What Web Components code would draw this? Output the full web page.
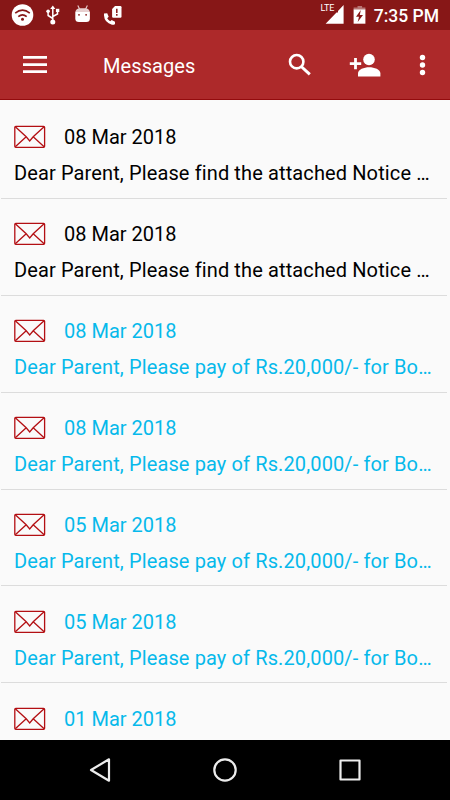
<!DOCTYPE html>
<html lang="en">
<head>
<meta charset="UTF-8">
<meta name="viewport" content="width=device-width, initial-scale=1.0">
<title>Messages</title>
<style>
    :root {
        --bar-color: #ad292a;
        --status-color: #871717;
        --unread-color: #06b9eb;
        --icon-color: #b30f13;
    }

    html, body {
        margin: 0;
        height: 100%;
        overflow: hidden;
    }

    body {
        font-family: Roboto, 'Liberation Sans', sans-serif;
        background: #fafafa;
    }
</style>
</head>
<body>
<app-screen>
    <status-bar slot="top" time="7:35 PM"></status-bar>
    <app-bar slot="top">Messages</app-bar>
    <message-item date="08 Mar 2018">Dear Parent, Please find the attached Notice …</message-item>
    <message-item date="08 Mar 2018">Dear Parent, Please find the attached Notice …</message-item>
    <message-item unread date="08 Mar 2018">Dear Parent, Please pay of Rs.20,000/- for Bo…</message-item>
    <message-item unread date="08 Mar 2018">Dear Parent, Please pay of Rs.20,000/- for Bo…</message-item>
    <message-item unread date="05 Mar 2018">Dear Parent, Please pay of Rs.20,000/- for Bo…</message-item>
    <message-item unread date="05 Mar 2018">Dear Parent, Please pay of Rs.20,000/- for Bo…</message-item>
    <message-item unread date="01 Mar 2018"></message-item>
    <nav-keys slot="bottom"></nav-keys>
</app-screen>

<script>
class AppScreen extends HTMLElement {
    constructor() {
        super();
        this.attachShadow({ mode: 'open' });
    }

    connectedCallback() {
        this.shadowRoot.innerHTML = `
            <style>
                :host {
                    display: flex;
                    flex-direction: column;
                    width: 450px;
                    height: 800px;
                    overflow: hidden;
                }

                .list {
                    flex: 1;
                    min-height: 0;
                    overflow: hidden;
                    padding: 2px 3px 0 1px;
                    background: #fafafa;
                }
            </style>
            <slot name="top"></slot>
            <div class="list"><slot></slot></div>
            <slot name="bottom"></slot>
        `;
    }
}

class StatusBar extends HTMLElement {
    constructor() {
        super();
        this.attachShadow({ mode: 'open' });
    }

    connectedCallback() {
        this.shadowRoot.innerHTML = `
            <style>
                :host {
                    display: flex;
                    flex: none;
                    align-items: center;
                    justify-content: space-between;
                    box-sizing: border-box;
                    height: 30px;
                    padding: 0 11px 0 11px;
                    color: #fff;
                    background: var(--status-color);
                }

                .group {
                    display: flex;
                    align-items: center;
                }

                svg {
                    display: block;
                }

                .time {
                    margin-left: 8px;
                    font-size: 17.5px;
                    font-weight: 500;
                    line-height: 30px;
                    padding-top: 1px;
                    white-space: nowrap;
                }
            </style>
            <div class="group">
                <svg width="116" height="30" viewBox="0 0 116 30" fill="#fff">
                    <circle cx="11.5" cy="15" r="10.8"/>
                    <g fill="none" stroke="#871717" stroke-width="1.6">
                        <path d="M4.2 13.2Q11.5 7.2 18.8 13.2"/>
                        <path d="M7.3 16.6Q11.5 13 15.7 16.6"/>
                    </g>
                    <circle cx="11.5" cy="19.3" r="1.5" fill="#871717"/>

                    <path d="M41.8 5.5l2.6 3.6h-5.2z"/>
                    <path d="M41.8 8v13M41.8 18.500l-4.700-3v-4M41.800 16.500l4.700-2.500v-3" fill="none" stroke="#fff" stroke-width="1.500"/>
                    <circle cx="37.100" cy="11.200" r="1.800"/>
                    <path d="M44.900 8.800h3.400V12h-3.400z"/>
                    <circle cx="41.800" cy="22" r="2.500"/>

                    <path d="M64.300 12h14.600v6.500a3.600 3.600 0 0 1-3.600 3.600h-7.400a3.600 3.600 0 0 1-3.600-3.600z"/>
                    <path d="M64.300 12a5 4.500 0 0 1 5-3.800h4.600a5 4.500 0 0 1 5 3.800z" fill="#e7cfcf"/>
                    <path d="M66.800 5.500l1.800 3.500M76.400 5.500l-1.800 3.500" stroke="#e7cfcf" stroke-width="1.100"/>
                    <circle cx="68" cy="14.800" r=".9" fill="#871717"/>
                    <circle cx="75.100" cy="14.800" r=".9" fill="#871717"/>

                    <path d="M93 13.600l3.200-.4 1.500 3.600-1.500 1.500q1.200 2 3 2.900l1.500-1.200 3.300 1.700v2.300q-1 1.100-3 .8-7.600-2.200-8-9.200z"/>
                    <path d="M104 6h5.300a1.200 1.200 0 0 1 1.200 1.200v9.300a1.200 1.200 0 0 1-1.200 1.200h-7a1.200 1.200 0 0 1-1.200-1.200V9z"/>
                    <path d="M105.800 8.800v4.200M105.800 14v1.800" stroke="#871717" stroke-width="1.500"/>
                </svg>
            </div>
            <div class="group">
                <svg width="46" height="30" viewBox="320 0 46 30" fill="#fff">
                    <text x="320.500" y="11" font-size="9" letter-spacing="-.1">LTE</text>
                    <path d="M343.600 5v18.700H325.600l10.900-11.300h1.500V11z"/>
                    <path d="M357.500 6h4.600v1.600h3.300V10h-11.800V7.600h3.900z" fill="#b77473"/>
                    <path d="M353.600 9.500h11.800v14.200h-11.800z"/>
                    <path d="M360.800 10l-4.800 6.700h3l-1.300 5.300 5.300-7h-3.200z" fill="#871717"/>
                </svg>
                <span class="time">${this.getAttribute('time')}</span>
            </div>
        `;
    }
}

class AppBar extends HTMLElement {
    constructor() {
        super();
        this.attachShadow({ mode: 'open' });
    }

    connectedCallback() {
        this.shadowRoot.innerHTML = `
            <style>
                :host {
                    display: flex;
                    flex: none;
                    align-items: center;
                    box-sizing: border-box;
                    height: 70px;
                    padding: 0 21px 0 23px;
                    border-bottom: 1px solid #930b0d;
                    color: #fff;
                    background: var(--bar-color);
                }

                svg {
                    display: block;
                    fill: #fff;
                }

                .title {
                    flex: 1;
                    margin-left: 56px;
                    font-size: 20px;
                    line-height: 26px;
                    letter-spacing: .08px;
                    padding-top: 2px;
                }

                .actions {
                    display: flex;
                    align-items: center;
                }
            </style>
            <svg width="24" height="69" viewBox="23 30 24 69">
                <path d="M23 56h24v2.700H23zM23 63.200h24v2.700H23zM23 70.200h24v2.700H23z"/>
            </svg>
            <div class="title"><slot></slot></div>
            <div class="actions">
                <svg width="141" height="69" viewBox="288 30 141 69">
                    <circle cx="296.700" cy="61.700" r="6.700" fill="none" stroke="#fff" stroke-width="2.600"/>
                    <path d="M301.200 66.500l8.600 7.800" fill="none" stroke="#fff" stroke-width="3"/>
                    <circle cx="369" cy="59.500" r="5.800"/>
                    <path d="M358 76.500v-3c0-4 6-6.200 11.200-6.200s11.200 2.200 11.200 6.200v3z"/>
                    <path d="M354.100 58h2.800v4.200h4.300v2.700h-4.300v4.300h-2.800v-4.300h-4.300v-2.700h4.300z"/>
                    <circle cx="422.500" cy="57.500" r="2.700"/>
                    <circle cx="422.500" cy="65" r="2.700"/>
                    <circle cx="422.500" cy="72.500" r="2.700"/>
                </svg>
            </div>
        `;
    }
}

class MessageItem extends HTMLElement {
    constructor() {
        super();
        this.attachShadow({ mode: 'open' });
    }

    connectedCallback() {
        this.shadowRoot.innerHTML = `
            <style>
                :host {
                    display: block;
                    box-sizing: border-box;
                    height: 96.900px;
                    padding: 21.300px 0 0 13px;
                    border-bottom: 1px solid #dcdcdc;
                    color: #000;
                    font-size: 20px;
                    line-height: 28px;
                    white-space: nowrap;
                }

                :host([unread]) {
                    color: var(--unread-color);
                }

                .head {
                    display: flex;
                    align-items: center;
                    gap: 18px;
                    height: 28px;
                }

                .icon {
                    fill: none;
                    stroke: var(--icon-color);
                    stroke-width: 1.300;
                }

                .text {
                    margin-top: 8px;
                    letter-spacing: .12px;
                    font-variant-ligatures: none;
                }
            </style>
            <div class="head">
                <svg class="icon" width="32" height="24" viewBox="0 0 32 24">
                    <rect x=".8" y="1.300" width="29.800" height="21" rx="1"/>
                    <path d="M1.300 1.800l10.900 10 3.500 4.200 3.500-4.200 10.900-10M1.300 21.800l10.900-10M30.100 21.800l-10.900-10"/>
                </svg>
                <span>${this.getAttribute('date')}</span>
            </div>
            <div class="text"><slot></slot></div>
        `;
    }
}

class NavKeys extends HTMLElement {
    constructor() {
        super();
        this.attachShadow({ mode: 'open' });
    }

    connectedCallback() {
        this.shadowRoot.innerHTML = `
            <style>
                :host {
                    display: flex;
                    flex: none;
                    align-items: center;
                    justify-content: center;
                    gap: 95px;
                    height: 60px;
                    background: #000;
                }

                svg {
                    fill: none;
                    stroke: #ececec;
                    stroke-width: 2.200;
                    stroke-linejoin: round;
                }
            </style>
            <svg width="30" height="30" viewBox="0 0 30 30"><path d="M6 15l18-10.700v21.400z"/></svg>
            <svg width="30" height="30" viewBox="0 0 30 30"><circle cx="15" cy="15" r="10.700"/></svg>
            <svg width="30" height="30" viewBox="0 0 30 30"><rect x="5.500" y="5.500" width="19" height="19"/></svg>
        `;
    }
}

customElements.define('app-screen', AppScreen);
customElements.define('status-bar', StatusBar);
customElements.define('app-bar', AppBar);
customElements.define('message-item', MessageItem);
customElements.define('nav-keys', NavKeys);
</script>
</body>
</html>
